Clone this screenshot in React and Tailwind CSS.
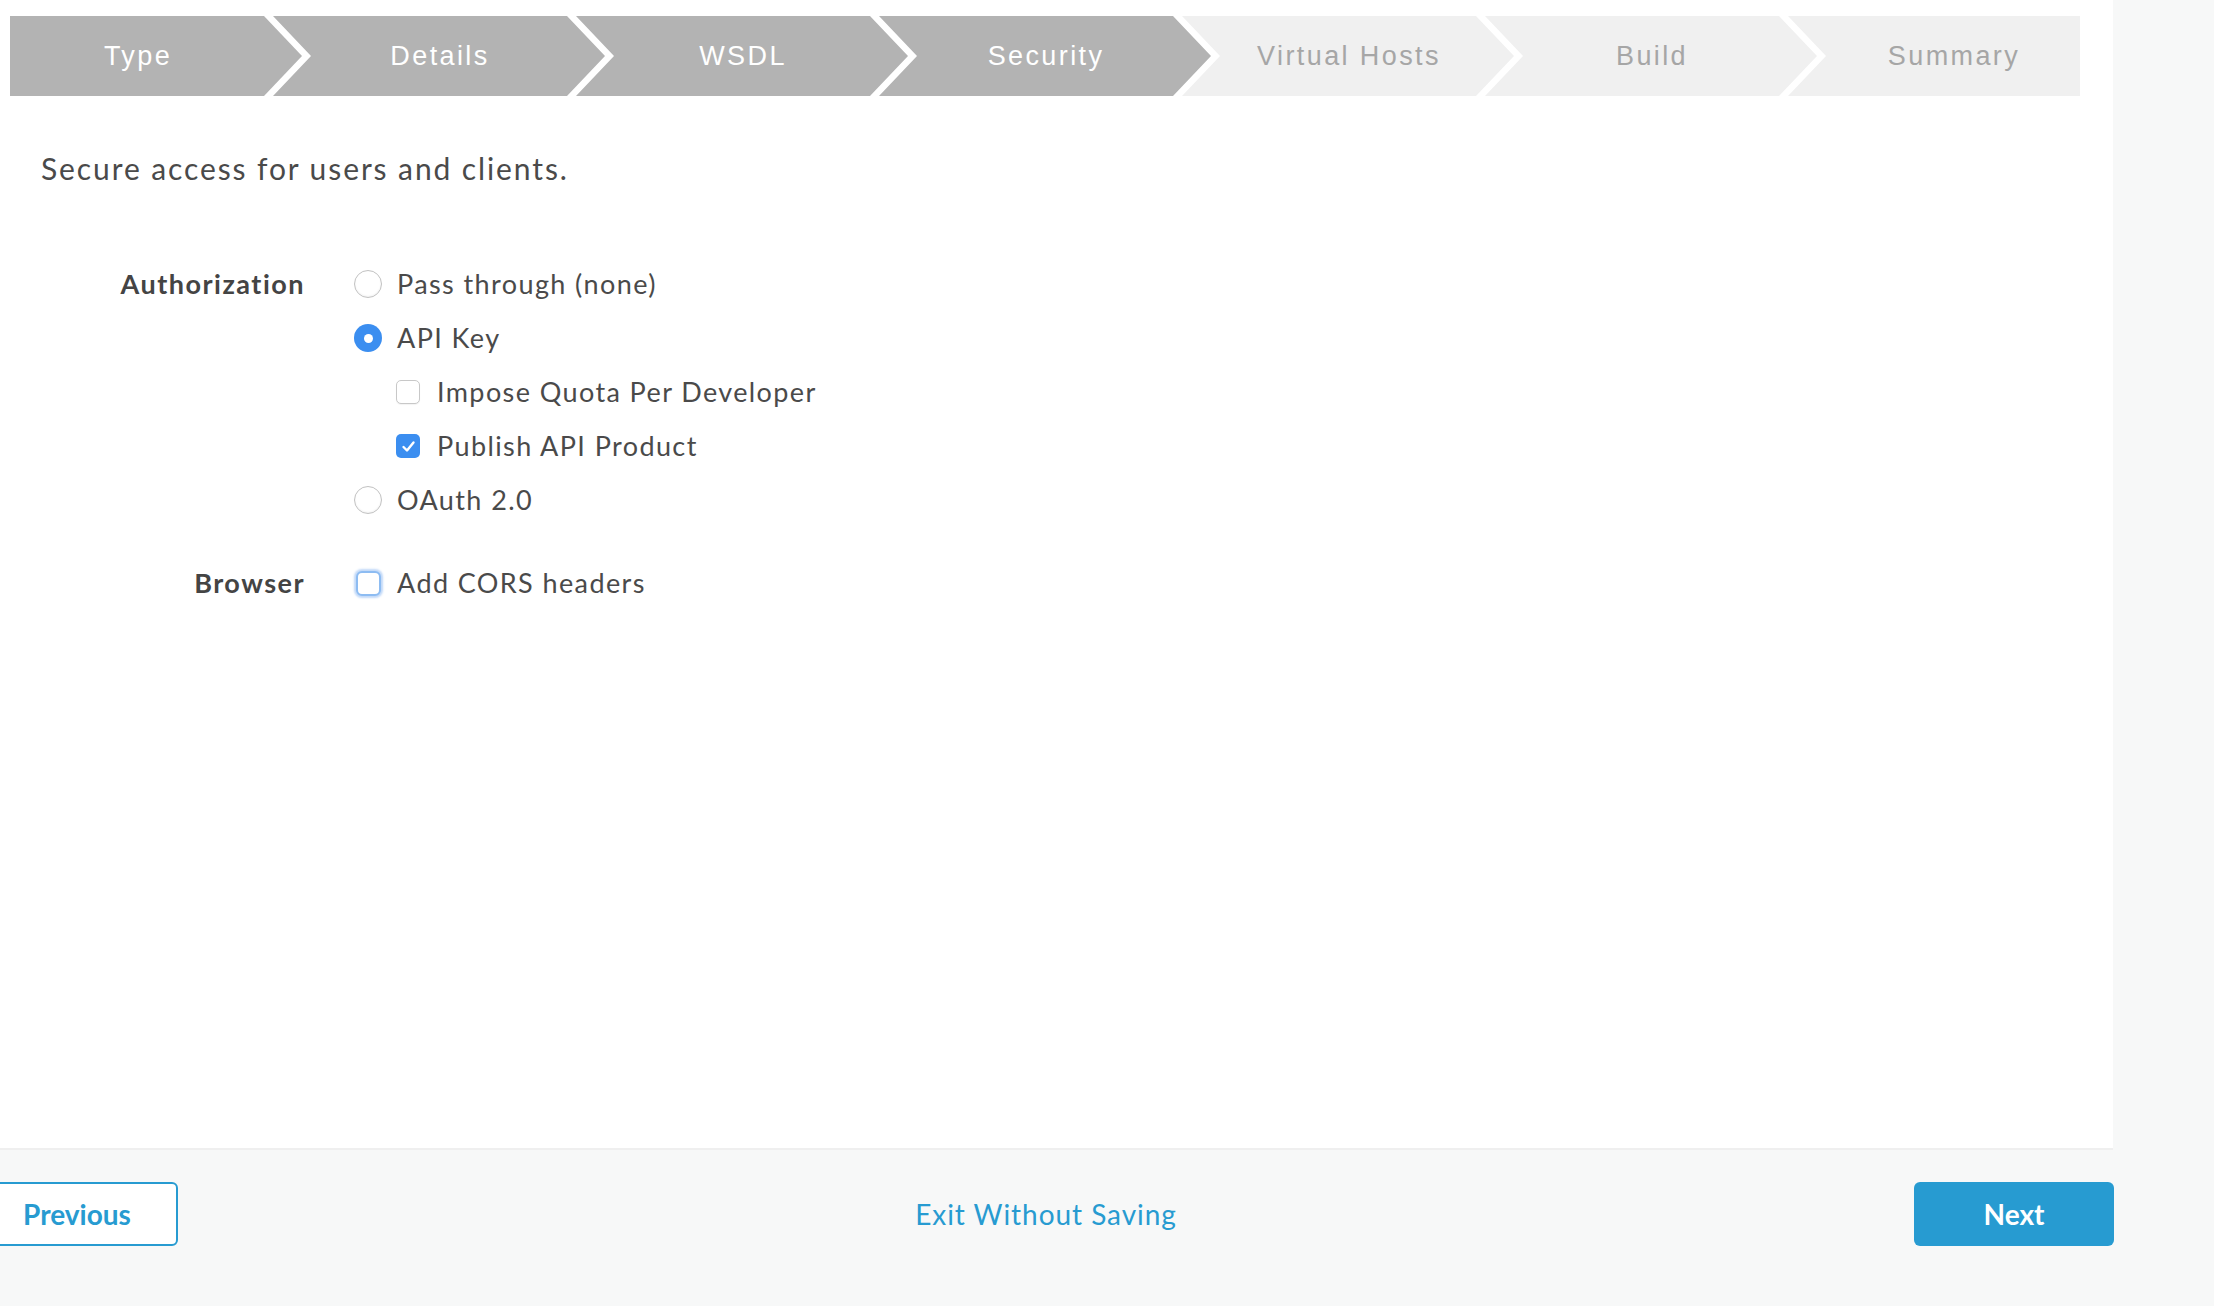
import React from "react";

const steps = [
  { label: "Type", done: true },
  { label: "Details", done: true },
  { label: "WSDL", done: true },
  { label: "Security", done: true },
  { label: "Virtual Hosts", done: false },
  { label: "Build", done: false },
  { label: "Summary", done: false },
];

function Stepper() {
  return (
    <div className="ml-[10px] flex h-[80px] w-[2070px] font-['Liberation_Sans',Arial,sans-serif] text-[27px] tracking-[2.4px]">
      {steps.map((s, i) => {
        const first = i === 0;
        const last = i === steps.length - 1;
        const color = s.done ? "bg-[#b3b3b3] text-white" : "bg-[#f0f0f0] text-[#a6a6a6]";
        if (first) {
          return (
            <div
              key={s.label}
              className={`${color} flex w-[292px] shrink-0 items-center justify-center pl-[2px] pr-[38px] [clip-path:polygon(0_0,calc(100%_-_38px)_0,100%_50%,calc(100%_-_38px)_100%,0_100%)]`}
            >
              {s.label}
            </div>
          );
        }
        if (last) {
          return (
            <div
              key={s.label}
              className={`${color} -ml-[29px] flex flex-1 items-center justify-center pl-[40px] [clip-path:polygon(0_0,100%_0,100%_100%,0_100%,38px_50%)]`}
            >
              {s.label}
            </div>
          );
        }
        return (
          <div
            key={s.label}
            className={`${color} -ml-[29px] flex w-[332px] shrink-0 items-center justify-center pl-[2px] [clip-path:polygon(0_0,calc(100%_-_38px)_0,100%_50%,calc(100%_-_38px)_100%,0_100%,38px_50%)]`}
          >
            {s.label}
          </div>
        );
      })}
    </div>
  );
}

function Radio({ checked }) {
  if (checked) {
    return (
      <span className="flex h-[28px] w-[28px] shrink-0 items-center justify-center rounded-full bg-[#3b8ef0]">
        <span className="h-[9px] w-[9px] rounded-full bg-white" />
      </span>
    );
  }
  return (
    <span className="block h-[28px] w-[28px] shrink-0 rounded-full border-[1.5px] border-[#c2c2c2] bg-white shadow-[inset_0_-1px_2px_rgba(0,0,0,0.06)]" />
  );
}

function Checkbox({ checked, focus }) {
  if (checked) {
    return (
      <span className="flex h-[24px] w-[24px] shrink-0 items-center justify-center rounded-[5px] bg-[#3b8ef0]">
        <svg width="15" height="13" viewBox="0 0 15 13" fill="none">
          <path d="M2.5 7 L6 10.5 L12.5 2.5" stroke="white" strokeWidth="2.4" strokeLinecap="round" strokeLinejoin="round" />
        </svg>
      </span>
    );
  }
  if (focus) {
    return (
      <span className="flex h-[28px] w-[28px] shrink-0 items-center justify-center">
        <span className="block h-[25px] w-[25px] rounded-[6px] border-2 border-[#8dbcf2] bg-white shadow-[0_0_2px_2px_rgba(120,170,240,0.45)]" />
      </span>
    );
  }
  return (
    <span className="block h-[24px] w-[24px] shrink-0 rounded-[5px] border-[1.5px] border-[#c8c8c8] bg-white shadow-[0_1px_1px_rgba(0,0,0,0.05)]" />
  );
}

function Row({ children, indent }) {
  return (
    <div className={`flex h-[54px] items-center ${indent ? "pl-[42px]" : ""}`}>{children}</div>
  );
}

export default function App() {
  return (
    <div className="min-h-screen bg-[#f7f8f8] font-['Lato',sans-serif] text-[#4a4a4a]">
      <div className="h-[1150px] w-[2113px] border-b-2 border-[#efefef] bg-white pt-[16px]">
        <Stepper />
        <p className="ml-[41px] mt-[54px] text-[30px] leading-[1.2] tracking-[1.9px] text-[#4a4a4a]">
          Secure access for users and clients.
        </p>
        <div className="mt-[71px] grid grid-cols-[264px_1fr] gap-x-[49px] pl-[41px] text-[27px] tracking-[1.4px]">
          <div className="text-right font-bold leading-[54px] tracking-[1.5px] text-[#444444]">Authorization</div>
          <div className="flex flex-col">
            <Row>
              <Radio />
              <span className="ml-[15px]">Pass through (none)</span>
            </Row>
            <Row>
              <Radio checked />
              <span className="ml-[15px]">API Key</span>
            </Row>
            <Row indent>
              <Checkbox />
              <span className="ml-[17px]">Impose Quota Per Developer</span>
            </Row>
            <Row indent>
              <Checkbox checked />
              <span className="ml-[17px]">Publish API Product</span>
            </Row>
            <Row>
              <Radio />
              <span className="ml-[15px]">OAuth 2.0</span>
            </Row>
          </div>
          <div className="mt-[29px] text-right font-bold leading-[54px] tracking-[1.5px] text-[#444444]">Browser</div>
          <div className="mt-[29px]">
            <Row>
              <Checkbox focus />
              <span className="ml-[15px]">Add CORS headers</span>
            </Row>
          </div>
        </div>
      </div>
      <footer className="flex w-[2114px] items-center justify-between pt-[32px] text-[28px]">
        <button className="-ml-[24px] flex h-[64px] w-[202px] items-center justify-center rounded-[6px] border-2 border-[#279bd1] bg-white font-bold text-[#279bd1]">
          Previous
        </button>
        <a className="tracking-[0.95px] text-[#279bd1]">Exit Without Saving</a>
        <button className="flex h-[64px] w-[200px] items-center justify-center rounded-[6px] bg-[#279bd1] font-bold text-white">
          Next
        </button>
      </footer>
    </div>
  );
}
